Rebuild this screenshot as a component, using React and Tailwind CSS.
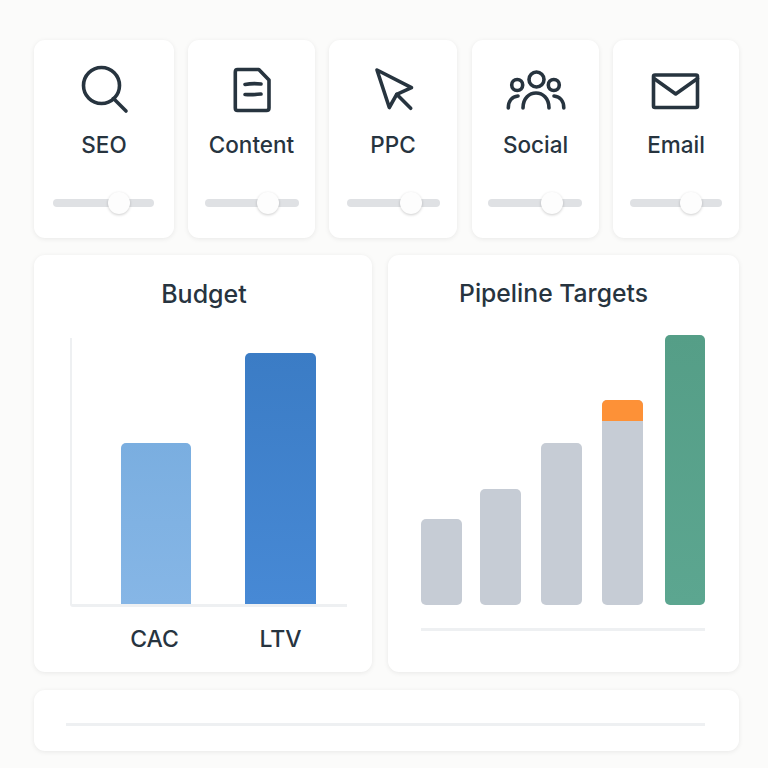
import React from "react";

const channels = [
  {
    name: "SEO",
    card: "w-[140px]",
    track: "ml-[19px] w-[101px]",
    thumb: "left-[55px]",
    viewBox: "74 64 60 50",
    icon: (
      <>
        <circle cx="101.5" cy="85.5" r="18" />
        <path d="M113.5 98.5 L126 111" />
      </>
    ),
  },
  {
    name: "Content",
    card: "ml-[14px] w-[127px]",
    track: "ml-[17px] w-[94px]",
    thumb: "left-[52px]",
    viewBox: "221.5 64 60 50",
    icon: (
      <>
        <path d="M237 69.5 H258.3 L268.5 80 V108 Q268.5 110.5 266 110.5 H237 Q234.8 110.5 234.8 108 V72 Q234.8 69.5 237 69.5 Z" />
        <path d="M244.5 84.5 Q252 83 260.5 84" />
        <path d="M244.5 94.5 Q252 95 260.5 94" />
      </>
    ),
  },
  {
    name: "PPC",
    card: "ml-[14px] w-[128px]",
    track: "ml-[18px] w-[93px]",
    thumb: "left-[53px]",
    viewBox: "363 64 60 50",
    icon: (
      <>
        <path d="M377 70 L411.5 87.7 L396.7 94.3 L389.3 107.5 Z" />
        <path d="M396.7 94.3 L410.7 108.3" />
      </>
    ),
  },
  {
    name: "Social",
    card: "ml-[15px] w-[127px]",
    track: "ml-[16px] w-[94px]",
    thumb: "left-[53px]",
    viewBox: "505.5 64 60 50",
    icon: (
      <>
        <circle cx="536" cy="79.5" r="7.5" />
        <circle cx="516.7" cy="85" r="5.5" />
        <circle cx="553.3" cy="85" r="5.5" />
        <path d="M522.5 108 C522.5 88 548.5 88 548.5 108" />
        <path d="M507.8 108 C507.8 101 511.5 96.5 517.5 96" />
        <path d="M563.3 108 C563.3 101 559.5 96.5 553.5 96" />
      </>
    ),
  },
  {
    name: "Email",
    card: "ml-[14px] w-[126px]",
    track: "ml-[17px] w-[92px]",
    thumb: "left-[50px]",
    viewBox: "646 64 60 50",
    icon: (
      <>
        <rect x="653.5" y="75" width="44" height="32.5" rx="1.5" />
        <path d="M654 78.5 L675.7 94 L697.5 78.5" />
      </>
    ),
  },
];

const pipeline = [
  { className: "w-[41px] h-[86px] bg-[#c6ccd5]" },
  { className: "ml-[18px] w-[41px] h-[116px] bg-[#c6ccd5]" },
  { className: "ml-[20px] w-[41px] h-[162px] bg-[#c6ccd5]" },
  { className: "ml-[20px] w-[41px] h-[205px] bg-[#c6ccd5]", top: true },
  { className: "ml-[22px] w-[40px] h-[270px] bg-gradient-to-b from-[#559e87] to-[#5ca690]" },
];

const cardClass = "rounded-[11px] bg-white shadow-[0_1px_5px_rgba(0,0,0,0.08)]";

const App = () => {
  return (
    <div className="min-h-screen bg-[#fbfbfa] pt-[40px] pl-[34px] font-['Inter',sans-serif] text-[#27343f]">
      <div className="w-[705px]">
        {/* Channels */}
        <div className="flex">
          {channels.map((c) => (
            <div key={c.name} className={`${c.card} ${cardClass} h-[198px] flex flex-col`}>
              <svg
                viewBox={c.viewBox}
                className="mt-[24px] h-[50px] w-[60px] self-center"
                fill="none"
                stroke="#27343f"
                strokeWidth="3.6"
                strokeLinecap="round"
                strokeLinejoin="round"
              >
                {c.icon}
              </svg>
              <p className="mt-[16px] text-center text-[22.5px] leading-[30px] font-medium">{c.name}</p>
              <div className={`${c.track} relative mt-[39px] h-[8px] rounded-full bg-[#dfe1e4]`}>
                <div
                  className={`${c.thumb} absolute -top-[7px] h-[22px] w-[22px] rounded-full bg-[#fdfdfd] shadow-[0_1px_3px_rgba(0,0,0,0.2)]`}
                ></div>
              </div>
            </div>
          ))}
        </div>

        {/* Charts */}
        <div className="mt-[17px] flex justify-between">
          <div className={`${cardClass} h-[417px] w-[338px]`}>
            <h2 className="mt-[23px] pl-[2px] text-center text-[25px] leading-[32px] font-medium">Budget</h2>
            <div className="mt-[28px] ml-[36px] flex h-[269px] w-[277px] items-end rounded-bl-[3px] border-b-[3px] border-l-2 border-[#eef0f2] pl-[49px]">
              <div className="h-[161px] w-[70px] rounded-t-[5px] bg-gradient-to-b from-[#7aaee0] to-[#86b6e6]"></div>
              <div className="ml-[54px] h-[251px] w-[71px] rounded-t-[5px] bg-gradient-to-b from-[#3b7cc5] to-[#4789d5]"></div>
            </div>
            <div className="mt-[17px] flex text-[23px] leading-[30px] font-medium">
              <span className="ml-[87px] w-[67px] text-center">CAC</span>
              <span className="ml-[59px] w-[67px] text-center">LTV</span>
            </div>
          </div>

          <div className={`${cardClass} h-[417px] w-[351px] px-[33px]`}>
            <h2 className="mt-[22px] w-[265px] text-center text-[24.7px] leading-[32px] font-medium whitespace-nowrap">
              Pipeline Targets
            </h2>
            <div className="mt-[26px] flex h-[270px] items-end">
              {pipeline.map((b, i) => (
                <div key={i} className={`${b.className} rounded-[5px]`}>
                  {b.top && <div className="h-[21px] rounded-t-[5px] bg-[#fd9137]"></div>}
                </div>
              ))}
            </div>
            <div className="mt-[23px] h-[3px] w-[284px] bg-[#eef0f2]"></div>
          </div>
        </div>

        {/* Bottom strip */}
        <div className={`${cardClass} mt-[18px] h-[61px] px-[32px] pt-[33px]`}>
          <div className="h-[3px] w-[639px] bg-[#eef0f2]"></div>
        </div>
      </div>
    </div>
  );
};

export default App;
